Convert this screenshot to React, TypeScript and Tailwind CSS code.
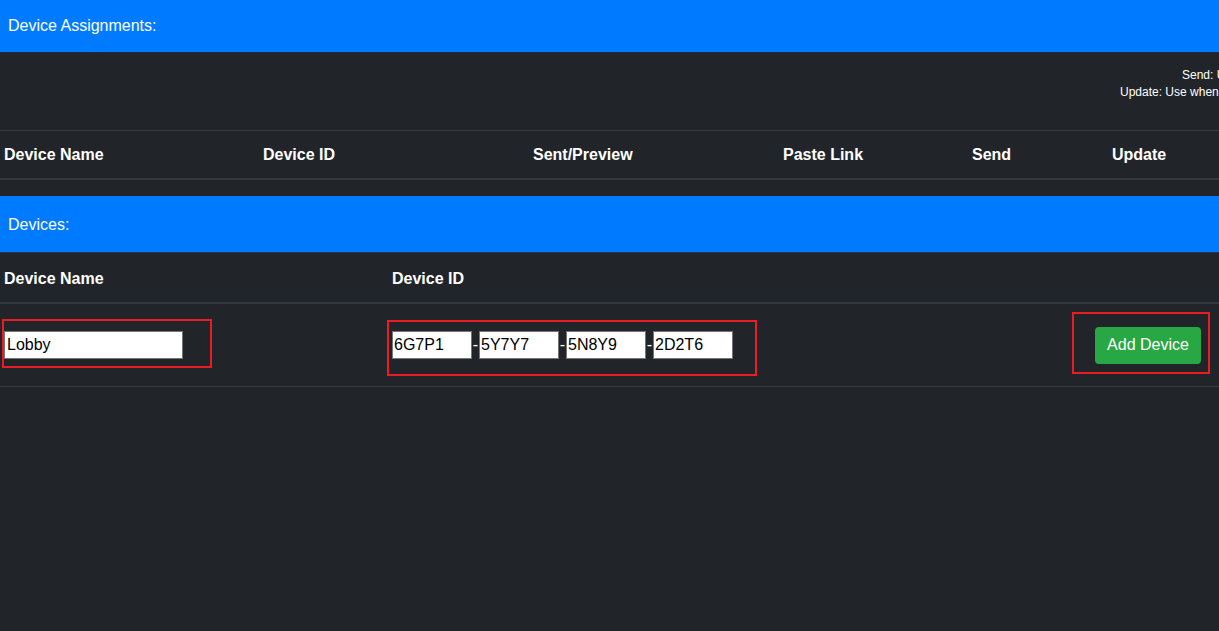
import React from 'react';

const font = { fontFamily: '"Liberation Sans", Arial, sans-serif' };

const idParts = ['6G7P1', '5Y7Y7', '5N8Y9', '2D2T6'];

const App: React.FC = () => {
  return (
    <div className="min-h-[631px] w-full overflow-hidden bg-[#212529] text-white" style={font}>
      {/* Device Assignments */}
      <div className="h-[53px] border-b border-[#1c2a3a] bg-[#007bff] pl-2 flex items-center text-base">
        Device Assignments:
      </div>

      <div className="h-[77px] overflow-hidden pt-[14px] text-xs leading-[17px] whitespace-nowrap">
        <div className="ml-[1182px]">Send: Use to send a new link to the device</div>
        <div className="ml-[1120px]">Update: Use when the link has changed</div>
      </div>

      <div className="grid grid-cols-[259px_270px_250px_189px_140px_1fr] border-t border-[#32383e] border-b-2 h-[50px] items-center font-bold text-base pt-[1px]">
        <div className="pl-1">Device Name</div>
        <div className="pl-1">Device ID</div>
        <div className="pl-1">Sent/Preview</div>
        <div className="pl-1">Paste Link</div>
        <div className="pl-1">Send</div>
        <div className="pl-1">Update</div>
      </div>

      <div className="h-4" />

      {/* Devices */}
      <div className="h-[57px] border-b border-[#1c3550] bg-[#007bff] pl-2 flex items-center text-base pt-[1px]">
        Devices:
      </div>

      <div className="grid grid-cols-[388px_1fr] h-[51px] items-center border-b-2 border-[#32383e] font-bold text-base pt-[2px]">
        <div className="pl-1">Device Name</div>
        <div className="pl-1">Device ID</div>
      </div>

      <div className="flex h-[83px] items-center border-b border-[#32383e]">
        <div className="relative w-[388px] pl-1">
          <input
            defaultValue="Lobby"
            className="h-[28px] w-[179px] border border-[#767676] bg-white px-[2px] text-base text-black outline-none"
            style={font}
          />
          <div className="pointer-events-none absolute left-[2px] top-[-12px] h-[49px] w-[210px] border-2 border-[#ed1c24]" />
        </div>

        <div className="relative flex items-center pl-1">
          {idParts.map((p, i) => (
            <React.Fragment key={p}>
              {i > 0 && <span className="w-[7px] text-center text-base leading-none">-</span>}
              <input
                defaultValue={p}
                className="h-[28px] w-[80px] border border-[#767676] bg-white px-[1px] text-base text-black outline-none"
                style={font}
              />
            </React.Fragment>
          ))}
          <div className="pointer-events-none absolute left-[-1px] top-[-11px] h-[56px] w-[370px] border-2 border-[#ed1c24]" />
        </div>

        <div className="ml-auto mr-[18px] relative">
          <button className="h-[37px] w-[106px] rounded bg-[#28a745] text-base text-white">
            Add Device
          </button>
          <div className="pointer-events-none absolute left-[-23px] top-[-15px] h-[62px] w-[138px] border-2 border-[#ed1c24]" />
        </div>
      </div>
    </div>
  );
};

export default App;
